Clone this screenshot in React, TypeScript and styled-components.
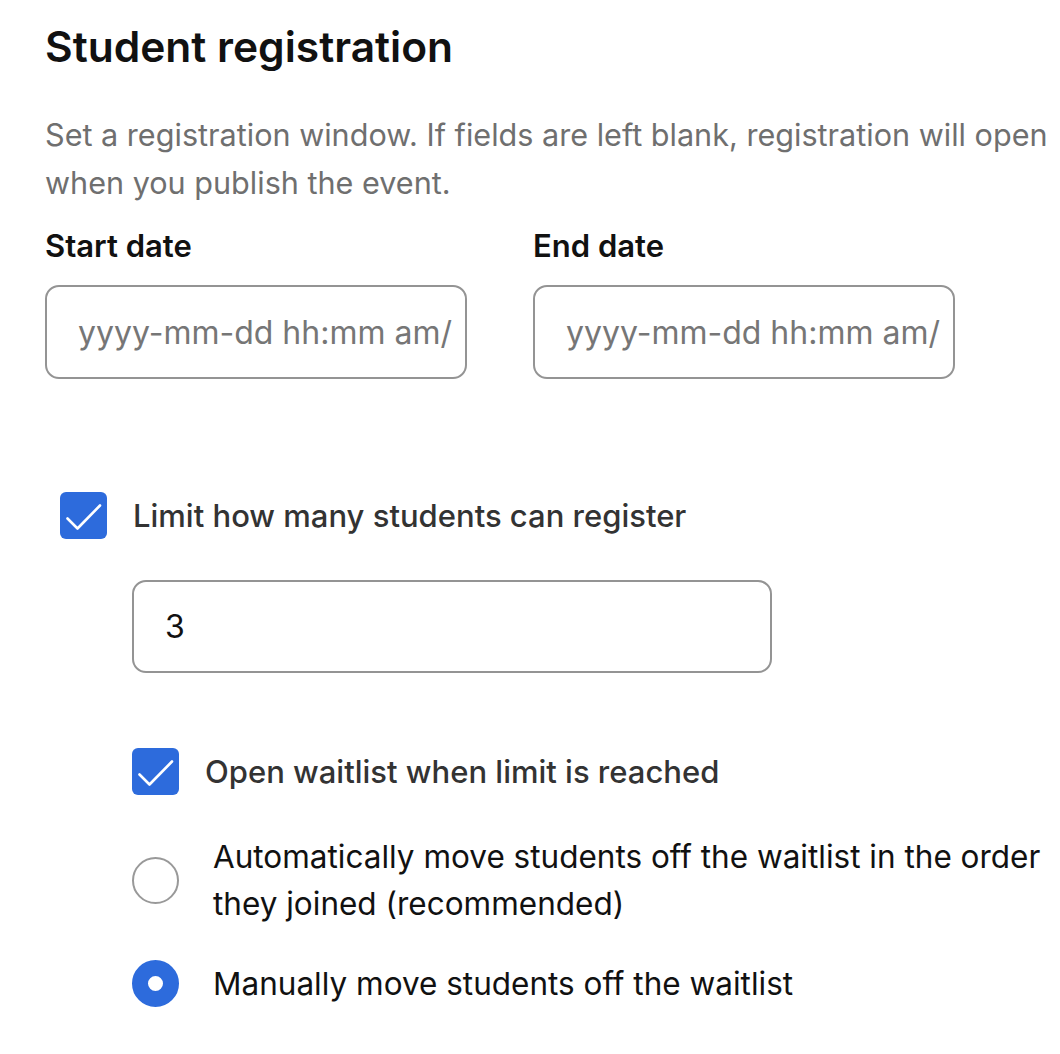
import React from 'react';
import styled, { createGlobalStyle } from 'styled-components';

const GlobalStyle = createGlobalStyle`
  html, body {
    margin: 0;
    padding: 0;
    background: #ffffff;
  }
  body {
    font-family: Inter, "Noto Sans", "Liberation Sans", sans-serif;
    color: #111111;
  }
`;

const Page = styled.div`
  width: 1015px;
  padding: 21px 0 40px 45px;
`;

const Title = styled.h2`
  margin: 0;
  font-size: 42.5px;
  line-height: 52px;
  font-weight: 600;
  color: #111111;
`;

const Description = styled.p`
  margin: 38px 0 0;
  font-size: 30.6px;
  line-height: 48px;
  color: #6f6f6f;
`;

const DateRow = styled.div`
  display: flex;
  gap: 66px;
  margin-top: 19px;
`;

const Field = styled.div`
  display: flex;
  flex-direction: column;
  gap: 19px;
`;

const Label = styled.label`
  font-size: 31px;
  line-height: 40px;
  font-weight: 600;
  color: #111111;
`;

const TextInput = styled.input<{ $width: number; $height: number; $top?: number }>`
  box-sizing: border-box;
  width: ${(p) => p.$width}px;
  height: ${(p) => p.$height}px;
  margin-top: ${(p) => p.$top ?? 0}px;
  padding: 0 12px 0 31px;
  border: 2px solid #949494;
  border-radius: 14px;
  font-family: inherit;
  font-size: 32px;
  color: #111111;
  background: #ffffff;
  outline: none;

  &::placeholder {
    color: #767676;
  }
`;

const Options = styled.div`
  display: flex;
  flex-direction: column;
  margin-left: 15px;
`;

const CheckRow = styled.div<{ $top: number }>`
  display: flex;
  align-items: center;
  gap: 26px;
  margin-top: ${(p) => p.$top}px;
`;

const Box = styled.span`
  flex: none;
  width: 47px;
  height: 47px;
  border-radius: 6px;
  background: #2d6bdc;
  display: flex;
`;

const CheckLabel = styled.span`
  font-size: 31px;
  line-height: 40px;
  font-weight: 500;
  color: #333333;
`;

const RadioRow = styled.div<{ $top: number }>`
  display: flex;
  align-items: center;
  gap: 34px;
  margin-top: ${(p) => p.$top}px;
`;

const RadioDot = styled.span<{ $on?: boolean }>`
  flex: none;
  box-sizing: border-box;
  width: 47px;
  height: 47px;
  border-radius: 50%;
  border: ${(p) => (p.$on ? '16.5px solid #2d6bdc' : '2px solid #999999')};
  background: #ffffff;
`;

const RadioLabel = styled.span`
  font-size: 31.5px;
  line-height: 47px;
  color: #111111;
`;

const Indented = styled.div`
  margin-left: 72px;
  display: flex;
  flex-direction: column;
`;

function Checkbox() {
  return (
    <Box>
      <svg width="47" height="47" viewBox="0 0 47 47" fill="none">
        <path d="M7.5 26.5 L17.5 36.5 L40 13.5" stroke="#ffffff" strokeWidth="2.6" strokeLinecap="round" strokeLinejoin="round" />
      </svg>
    </Box>
  );
}

export default function App() {
  return (
    <>
      <GlobalStyle />
      <Page>
        <Title>Student registration</Title>
        <Description>
          Set a registration window. If fields are left blank, registration will open when you publish the event.
        </Description>
        <DateRow>
          <Field>
            <Label>Start date</Label>
            <TextInput $width={422} $height={94} placeholder="yyyy-mm-dd hh:mm am/pm" />
          </Field>
          <Field>
            <Label>End date</Label>
            <TextInput $width={422} $height={94} placeholder="yyyy-mm-dd hh:mm am/pm" />
          </Field>
        </DateRow>
        <Options>
          <CheckRow $top={113}>
            <Checkbox />
            <CheckLabel>Limit how many students can register</CheckLabel>
          </CheckRow>
          <Indented>
            <TextInput $width={640} $height={93} $top={41} defaultValue="3" />
            <CheckRow $top={75}>
              <Checkbox />
              <CheckLabel>Open waitlist when limit is reached</CheckLabel>
            </CheckRow>
            <RadioRow $top={38}>
              <RadioDot />
              <RadioLabel>
                Automatically move students off the waitlist in the order they joined (recommended)
              </RadioLabel>
            </RadioRow>
            <RadioRow $top={33}>
              <RadioDot $on />
              <RadioLabel>Manually move students off the waitlist</RadioLabel>
            </RadioRow>
          </Indented>
        </Options>
      </Page>
    </>
  );
}
